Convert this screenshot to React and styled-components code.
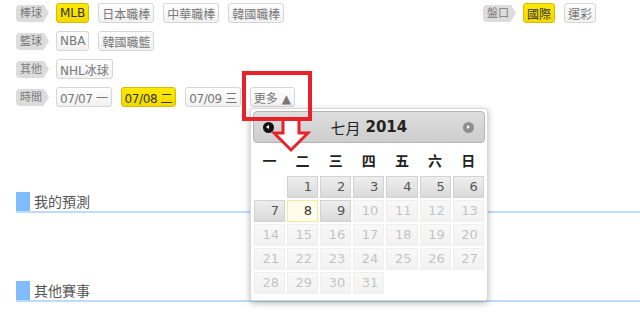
import React from "react";
import styled, { createGlobalStyle, css } from "styled-components";

const GlobalStyle = createGlobalStyle`
  html, body {
    margin: 0;
    padding: 0;
    background: #fff;
  }
  body {
    font-family: "DejaVu Sans", "Noto Sans CJK TC", sans-serif;
    width: 640px;
    height: 322px;
    overflow: hidden;
  }
`;

const Page = styled.div`
  position: relative;
  width: 640px;
  height: 322px;
`;

/* filter rows */

const FilterPanel = styled.div`
  display: flex;
  flex-direction: column;
  gap: 8px;
  padding: 3px 44px 0 16px;
`;

const FilterRow = styled.div`
  display: flex;
  align-items: center;
  gap: 9px;
  height: 20px;
`;

const RowLabel = styled.span`
  position: relative;
  display: inline-flex;
  align-items: center;
  height: 17px;
  padding: 0 2px 0 4px;
  margin-right: 3px;
  background: #dcdcdc;
  border-radius: 4px 0 0 4px;
  color: #7a7a7a;
  font-size: 11px;
  line-height: 17px;

  &::after {
    content: "";
    position: absolute;
    right: -5px;
    top: 0;
    border-style: solid;
    border-width: 8.5px 0 8.5px 5px;
    border-color: transparent transparent transparent #dcdcdc;
  }
`;

const Chip = styled.span`
  display: inline-flex;
  align-items: center;
  height: 18px;
  padding: 0 3px;
  border: 1px solid #d6d6d6;
  border-radius: 3px;
  background: linear-gradient(#ffffff, #f1f1f1);
  color: #777;
  font-size: 12px;
  white-space: nowrap;
  letter-spacing: ${({ $date }) => ($date ? "-0.4px" : "normal")};

  ${({ $active }) => $active && css`
    background: linear-gradient(#ffe900, #f2d900);
    border-color: #d4bd00;
    color: #333;
  `}
`;

const RightGroup = styled.div`
  display: flex;
  align-items: center;
  gap: 9px;
  margin-left: auto;
`;

const MoreWrap = styled.div`
  position: relative;
  display: flex;
`;

/* annotation overlay */

const MarkBox = styled.div`
  position: absolute;
  left: -8px;
  top: -16px;
  width: 62px;
  height: 42px;
  border: 4px solid #e8212b;
  z-index: 5;
`;

const MarkArrow = styled.svg`
  position: absolute;
  left: 21px;
  top: 31px;
  z-index: 4;
`;

/* calendar popup */

const Calendar = styled.div`
  position: absolute;
  left: 0;
  top: 21px;
  width: 232px;
  padding: 2px 2px 6px;
  border: 1px solid #dadada;
  border-radius: 3px;
  background: #fff;
  box-shadow: 0 2px 6px rgba(0, 0, 0, 0.3);
  z-index: 3;
`;

const CalHeader = styled.div`
  position: relative;
  display: flex;
  align-items: center;
  justify-content: center;
  height: 30px;
  border: 1px solid #b4b4b4;
  border-radius: 4px;
  background: linear-gradient(#dedede, #cdcdcd);
  color: #222;
  font-size: 15px;

  b {
    margin-left: 5px;
  }
`;

const NavIcon = styled.span`
  position: absolute;
  top: 10px;
  ${({ $side }) => ($side === "prev" ? "left: 9px;" : "right: 10px;")}
  width: 11px;
  height: 11px;
  border-radius: 50%;
  background: ${({ $side }) => ($side === "prev" ? "#111" : "#8f8f8f")};

  &::after {
    content: "";
    position: absolute;
    top: 3px;
    border-style: solid;
    ${({ $side }) => ($side === "prev"
      ? "left: 3px; border-width: 2.5px 3px 2.5px 0; border-color: transparent #fff transparent transparent;"
      : "left: 4px; border-width: 2.5px 0 2.5px 3px; border-color: transparent transparent transparent #fff;")}
  }
`;

const DowRow = styled.div`
  display: grid;
  grid-template-columns: repeat(7, 1fr);
  gap: 2px;
  height: 33px;
  align-items: center;
  padding: 0 1px;
  font-weight: bold;
  font-size: 14px;
  color: #222;
  text-align: center;
  font-family: "Noto Sans CJK TC", sans-serif;
`;

const DayGrid = styled.div`
  display: grid;
  grid-template-columns: repeat(7, 1fr);
  grid-auto-rows: 22px;
  gap: 2px;
  padding: 0 1px;
`;

const DayCell = styled.span`
  box-sizing: border-box;
  padding-right: 5px;
  border: 1px solid #d2d2d2;
  background: linear-gradient(#eeeeee, #dadada);
  color: #555;
  font-size: 13px;
  line-height: 20px;
  text-align: right;

  ${({ $today }) => $today && css`
    background: #fffcec;
    border-color: #f6e9a6;
    color: #333;
  `}

  ${({ $off }) => $off && css`
    opacity: 0.35;
  `}
`;

const Blank = styled.span``;

/* sections */

const Sections = styled.div`
  display: flex;
  flex-direction: column;
  gap: 68px;
  margin: 85px 0 0 16px;
`;

const SectionTitle = styled.h2`
  display: flex;
  align-items: flex-end;
  gap: 4px;
  height: 19px;
  margin: 0;
  border-bottom: 2px solid #bcdcfb;
  color: #555;
  font-weight: normal;
  font-size: 14px;
  font-family: "Noto Sans CJK TC", sans-serif;
  line-height: 19px;

  &::before {
    content: "";
    width: 14px;
    height: 19px;
    background: #80bcff;
  }
`;

const dows = ["一", "二", "三", "四", "五", "六", "日"];

function MonthCalendar() {
  const days = Array.from({ length: 31 }, (_, i) => i + 1);
  return (
    <Calendar>
      <CalHeader>
        <NavIcon $side="prev" />
        七月<b>2014</b>
        <NavIcon $side="next" />
      </CalHeader>
      <DowRow>
        {dows.map((d) => <span key={d}>{d}</span>)}
      </DowRow>
      <DayGrid>
        <Blank />
        {days.map((d) => (
          <DayCell key={d} $today={d === 8} $off={d > 9}>{d}</DayCell>
        ))}
      </DayGrid>
    </Calendar>
  );
}

export default function App() {
  return (
    <Page>
      <GlobalStyle />
      <FilterPanel>
        <FilterRow>
          <RowLabel>棒球</RowLabel>
          <Chip $active>MLB</Chip>
          <Chip>日本職棒</Chip>
          <Chip>中華職棒</Chip>
          <Chip>韓國職棒</Chip>
          <RightGroup>
            <RowLabel>盤口</RowLabel>
            <Chip $active>國際</Chip>
            <Chip>運彩</Chip>
          </RightGroup>
        </FilterRow>
        <FilterRow>
          <RowLabel>籃球</RowLabel>
          <Chip>NBA</Chip>
          <Chip>韓國職籃</Chip>
        </FilterRow>
        <FilterRow>
          <RowLabel>其他</RowLabel>
          <Chip>NHL冰球</Chip>
        </FilterRow>
        <FilterRow>
          <RowLabel>時間</RowLabel>
          <Chip $date>07/07 一</Chip>
          <Chip $date $active>07/08 二</Chip>
          <Chip $date>07/09 三</Chip>
          <MoreWrap>
            <Chip>更多 ▲</Chip>
            <MonthCalendar />
            <MarkBox />
            <MarkArrow width="40" height="36" viewBox="0 0 40 36">
              <polygon
                points="12,1 28,1 28,15 37,15 20,32 3,15 12,15"
                fill="#fff"
                stroke="#e8212b"
                strokeWidth="3"
              />
            </MarkArrow>
          </MoreWrap>
        </FilterRow>
      </FilterPanel>
      <Sections>
        <SectionTitle>我的預測</SectionTitle>
        <SectionTitle>其他賽事</SectionTitle>
      </Sections>
    </Page>
  );
}
